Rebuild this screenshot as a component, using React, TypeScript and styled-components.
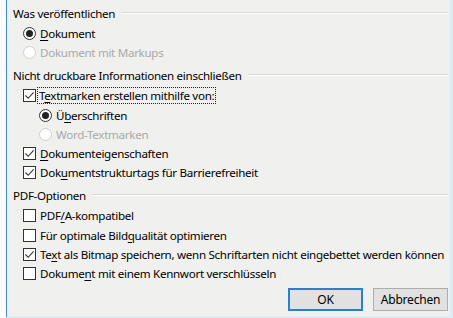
import React from "react";
import styled, { createGlobalStyle } from "styled-components";

const Global = createGlobalStyle`
  html, body { margin: 0; padding: 0; background: #ffffff; }
  body { font-family: "Noto Sans", "Open Sans", sans-serif; font-size: 11.6px; letter-spacing: -0.3px; color: #000; }
`;

const Page = styled.div`
  display: flex;
  width: 453px;
  height: 318px;
  overflow: hidden;
`;

const LeftStrip = styled.div`
  flex: none;
  width: 6px;
  background: #fbfbfb;
`;

const RightStrip = styled.div`
  flex: none;
  width: 3px;
  background: #d6eef6;
`;

const Dialog = styled.div`
  flex: 1;
  min-width: 0;
  display: flex;
  flex-direction: column;
  background: #f0f0ee;
  border-left: 1px solid #3f8bd6;
  border-bottom: 2px solid #dcecf3;
  padding: 3px 2px 0 6px;
  box-sizing: border-box;
`;

const Header = styled.div<{ $first?: boolean }>`
  display: flex;
  align-items: center;
  height: 20px;
  margin-top: ${(p) => (p.$first ? 0 : 3)}px;
  margin-bottom: 1px;
  white-space: nowrap;
`;

const HeaderLine = styled.div`
  flex: 1;
  height: 0;
  margin-left: 6px;
  border-top: 1px solid #d8d8d6;
  border-bottom: 1px solid #fdfdfd;
`;

const Row = styled.div<{ $level: number }>`
  display: flex;
  align-items: center;
  height: 19.2px;
  padding-left: ${(p) => (p.$level ? 26 : 10)}px;
  white-space: nowrap;
`;

const Label = styled.span<{ $disabled?: boolean; $focus?: boolean }>`
  margin-left: ${(p) => (p.$focus ? 2 : 4)}px;
  padding: ${(p) => (p.$focus ? "0 1px" : "0")};
  color: ${(p) => (p.$disabled ? "#a9a9a9" : "#000")};
  outline: ${(p) => (p.$focus ? "1px dotted #222" : "none")};
  line-height: 15px;
`;

const U = styled.span`
  text-decoration: underline;
  text-underline-offset: 2px;
`;

const RadioCircle = styled.span<{ $disabled?: boolean }>`
  width: 13px;
  height: 13px;
  box-sizing: border-box;
  border-radius: 50%;
  border: 1px solid ${(p) => (p.$disabled ? "#cfcfcf" : "#333")};
  background: #fff;
  display: inline-flex;
  align-items: center;
  justify-content: center;
  flex: none;
`;

const RadioDot = styled.span`
  width: 7px;
  height: 7px;
  border-radius: 50%;
  background: #222;
`;

const Box = styled.span`
  width: 13px;
  height: 13px;
  box-sizing: border-box;
  border: 1px solid #333;
  background: #fff;
  display: inline-flex;
  align-items: center;
  justify-content: center;
  flex: none;
`;

const ButtonBar = styled.div`
  display: flex;
  justify-content: flex-end;
  gap: 10px;
  margin-top: auto;
  margin-bottom: 5px;
  padding-right: 0px;
`;

const Button = styled.button<{ $default?: boolean }>`
  width: 75px;
  height: 23px;
  box-sizing: border-box;
  font-family: inherit;
  font-size: 12px;
  letter-spacing: -0.2px;
  color: #000;
  background: #e1e1e1;
  border: ${(p) => (p.$default ? "2px solid #2b7fd0" : "1px solid #adadad")};
  padding: 0;
`;

const Check = () => (
  <svg width="11" height="11" viewBox="0 0 11 11">
    <path d="M1.5 5.5 L4.2 8.3 L9.6 2.4" fill="none" stroke="#333" strokeWidth="1.1" />
  </svg>
);

const Radio = ({ checked, disabled }: { checked?: boolean; disabled?: boolean }) => (
  <RadioCircle $disabled={disabled}>{checked && <RadioDot />}</RadioCircle>
);

const CheckBox = ({ checked }: { checked?: boolean }) => <Box>{checked && <Check />}</Box>;

export default function App() {
  return (
    <>
      <Global />
      <Page>
        <LeftStrip />
        <Dialog>
          <Header $first>
            Was veröffentlichen
            <HeaderLine />
          </Header>
          <Row $level={0}>
            <Radio checked />
            <Label>
              <U>D</U>okument
            </Label>
          </Row>
          <Row $level={0}>
            <Radio disabled />
            <Label $disabled>Dokument mit Markups</Label>
          </Row>

          <Header>
            Nicht druckbare Informationen einschließen
            <HeaderLine />
          </Header>
          <Row $level={0}>
            <CheckBox checked />
            <Label $focus>
              T<U>e</U>xtmarken erstellen mithilfe von:
            </Label>
          </Row>
          <Row $level={1}>
            <Radio checked />
            <Label>
              Ü<U>b</U>erschriften
            </Label>
          </Row>
          <Row $level={1}>
            <Radio disabled />
            <Label $disabled>Word-Textmarken</Label>
          </Row>
          <Row $level={0}>
            <CheckBox checked />
            <Label>
              <U>D</U>okumenteigenschaften
            </Label>
          </Row>
          <Row $level={0}>
            <CheckBox checked />
            <Label>
              Dok<U>u</U>mentstrukturtags für Barrierefreiheit
            </Label>
          </Row>

          <Header>
            PDF-Optionen
            <HeaderLine />
          </Header>
          <Row $level={0}>
            <CheckBox />
            <Label>
              PDF<U>/</U>A-kompatibel
            </Label>
          </Row>
          <Row $level={0}>
            <CheckBox />
            <Label>
              Für optimale Bild<U>q</U>ualität optimieren
            </Label>
          </Row>
          <Row $level={0}>
            <CheckBox checked />
            <Label>
              Te<U>x</U>t als Bitmap speichern, wenn Schriftarten nicht eingebettet werden können
            </Label>
          </Row>
          <Row $level={0}>
            <CheckBox />
            <Label>
              Dokume<U>n</U>t mit einem Kennwort verschlüsseln
            </Label>
          </Row>

          <ButtonBar>
            <Button $default>OK</Button>
            <Button>Abbrechen</Button>
          </ButtonBar>
        </Dialog>
        <RightStrip />
      </Page>
    </>
  );
}
